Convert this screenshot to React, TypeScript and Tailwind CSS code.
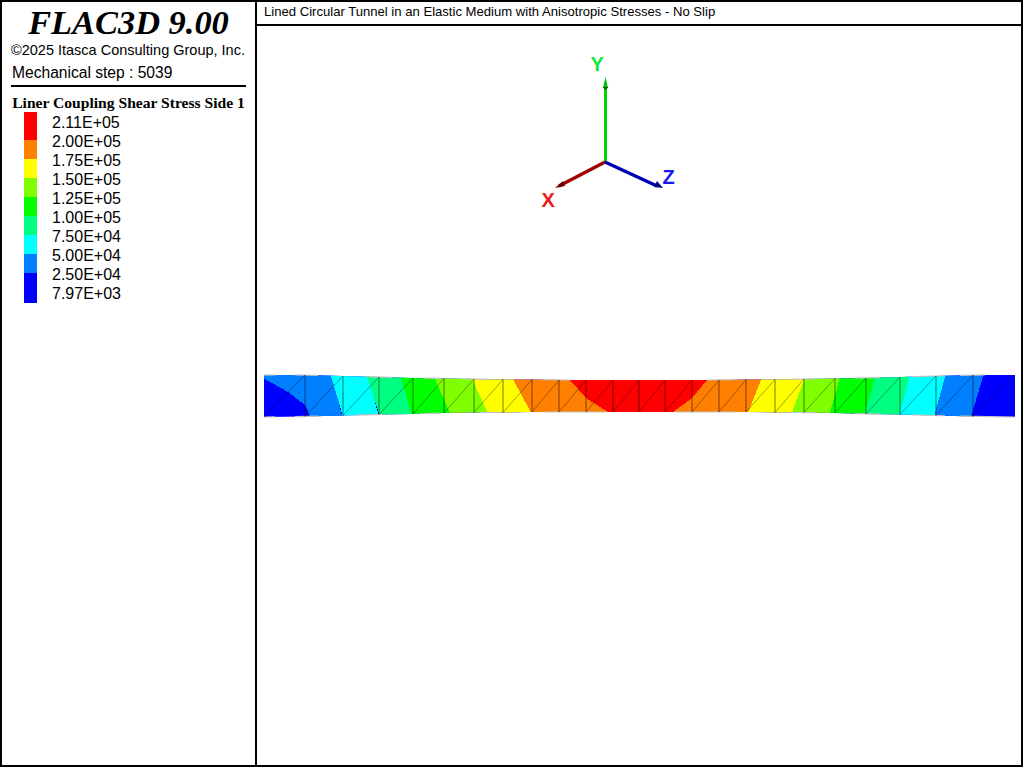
const legend = [
  { c: "bg-[#ff0000] h-[28px]", v: "2.11E+05" },
  { c: "bg-[#ff8000] h-[19px]", v: "2.00E+05" },
  { c: "bg-[#ffff00] h-[19px]", v: "1.75E+05" },
  { c: "bg-[#80ff00] h-[19px]", v: "1.50E+05" },
  { c: "bg-[#00ff00] h-[19px]", v: "1.25E+05" },
  { c: "bg-[#00ff80] h-[19px]", v: "1.00E+05" },
  { c: "bg-[#00ffff] h-[19px]", v: "7.50E+04" },
  { c: "bg-[#0080ff] h-[19px]", v: "5.00E+04" },
  { c: "bg-[#0000ff] h-[30px]", v: "2.50E+04" },
];

const tops: [number, number][] = [
  [264, 375], [305, 375], [343, 376], [379, 377], [413, 378], [444, 378.5], [474, 379], [503, 379.5],
  [532, 379.5], [559, 380], [586, 380], [613, 380], [639, 380], [665, 380], [692, 380], [719, 380],
  [746, 379.5], [775, 379.5], [804, 379], [835, 378.5], [866, 378], [900, 377], [936, 376], [973, 375], [1015, 375],
];
const bots: [number, number][] = [
  [264, 417], [305, 416.5], [343, 415.5], [379, 414.5], [413, 414], [444, 413], [474, 412.5], [503, 412.5],
  [532, 412], [559, 412], [586, 412], [613, 412], [639, 412], [665, 412], [692, 412], [719, 412],
  [746, 412], [775, 412.5], [804, 412.5], [835, 413], [866, 414], [900, 414.5], [936, 415.5], [973, 416.5], [1015, 417],
];
const outline = [...tops, ...[...bots].reverse()].map((p) => p.join(",")).join(" ");

const regions: { fill: string; pts: string }[] = [
  { fill: "#0000ff", pts: "260,370 1020,370 1020,420 260,420" },
  { fill: "#0080ff", pts: "260,370 331,370 343,420 312,420 305,405 288,392 263,378 260,376" },
  { fill: "#00ffff", pts: "330,370 366,370 380,420 344,420 331,376" },
  { fill: "#00ff80", pts: "365,370 400,370 414,420 381,420" },
  { fill: "#00ff00", pts: "399,370 432,370 454,420 413,420" },
  { fill: "#80ff00", pts: "431,370 469,370 492,420 453,420" },
  { fill: "#ffff00", pts: "468,370 509,370 536,420 491,420" },
  { fill: "#ff8000", pts: "508,370 766,370 745,420 535,420" },
  { fill: "#ff0000", pts: "562,370 570,380 586,398 608,412 612,420 668,420 673,412 692,398 707,380 715,370" },
  { fill: "#ffff00", pts: "765,370 809,370 790,420 745,420" },
  { fill: "#80ff00", pts: "808,370 843,370 829,420 789,420" },
  { fill: "#00ff00", pts: "842,370 878,370 864,420 828,420" },
  { fill: "#00ff80", pts: "877,370 912,370 899,420 863,420" },
  { fill: "#00ffff", pts: "911,370 948,370 934,420 898,420" },
  { fill: "#0080ff", pts: "947,370 985,370 970,420 933,420" },
];

const grayTop: [number, number][] = [[264, 275], [295, 318], [366, 392], [424, 440], [465, 490], [544, 570], [707, 735], [790, 815], [855, 880], [912, 945], [960, 985]];
const grayBot: [number, number][] = [[264, 275], [295, 318], [356, 382], [420, 440], [480, 500], [545, 605], [675, 735], [790, 815], [855, 880], [912, 945], [960, 1015]];

function yAt(line: [number, number][], x: number) {
  for (let i = 0; i < line.length - 1; i++) {
    const [a, b] = [line[i], line[i + 1]];
    if (x >= a[0] && x <= b[0]) return a[1] + ((b[1] - a[1]) * (x - a[0])) / (b[0] - a[0]);
  }
  return line[line.length - 1][1];
}

export default function App() {
  return (
    <div className="w-[1023px] h-[767px] bg-white border-2 border-black flex overflow-hidden font-['Liberation_Sans',Arial,sans-serif] text-black">
      <aside className="w-[253px] shrink-0 flex flex-col pl-[9px] pr-[9px]">
        <div className="h-[40px] text-center whitespace-nowrap font-['Liberation_Serif','Times_New_Roman',serif] italic font-bold text-[34.4px] leading-[40px]">
          FLAC3D 9.00
        </div>
        <div className="mt-[-1px] h-[18px] text-[14.5px] leading-[18px] whitespace-nowrap">©2025 Itasca Consulting Group, Inc.</div>
        <div className="mt-[5px] h-[18px] pl-[1px] text-[15.6px] leading-[18px] whitespace-nowrap">Mechanical step : 5039</div>
        <div className="mt-[3px] h-[2px] bg-black" />
        <div className="mt-[7px] h-[17px] flex justify-center whitespace-nowrap font-['Liberation_Serif','Times_New_Roman',serif] font-bold text-[15.6px] leading-[17px]">
          Liner Coupling Shear Stress Side 1
        </div>
        <div className="mt-[1px] ml-[13px] flex gap-[15px]">
          <div className="w-[13px] flex flex-col">
            {legend.map((l) => (
              <div key={l.v} className={l.c} />
            ))}
          </div>
          <div className="flex flex-col text-[16px] leading-[19px] mt-[1px]">
            {legend.map((l) => (
              <div key={l.v} className="h-[19px] whitespace-nowrap">{l.v}</div>
            ))}
            <div className="h-[19px] whitespace-nowrap">7.97E+03</div>
          </div>
        </div>
      </aside>
      <main className="flex-1 min-w-0 border-l-2 border-black flex flex-col">
        <div className="h-[24px] shrink-0 border-b-2 border-black pl-[7px] text-[13.1px] leading-[20px] whitespace-nowrap">
          Lined Circular Tunnel in an Elastic Medium with Anisotropic Stresses - No Slip
        </div>
        <svg className="block flex-1" viewBox="257 26 764 739" width="764" height="739">
          <defs>
            <clipPath id="band">
              <polygon points={outline} />
            </clipPath>
          </defs>
          <g clipPath="url(#band)" shapeRendering="crispEdges">
            {regions.map((r, i) => (
              <polygon key={i} points={r.pts} fill={r.fill} />
            ))}
          </g>
          {grayTop.map(([a, b], i) => (
            <line key={i} x1={a} x2={b} y1={yAt(tops, a)} y2={yAt(tops, b)} stroke="#c4c4c4" strokeWidth="1.2" />
          ))}
          {grayBot.map(([a, b], i) => (
            <line key={i} x1={a} x2={b} y1={yAt(bots, a)} y2={yAt(bots, b)} stroke="#c4c4c4" strokeWidth="1.2" />
          ))}
          {tops.map((t, i) => (
            <line key={i} x1={t[0]} y1={t[1]} x2={bots[i][0]} y2={bots[i][1]} stroke="#000" strokeOpacity={i === 0 || i === 24 ? 0 : 0.4} strokeWidth="1.3" />
          ))}
          {tops.slice(1).map((t, i) => (
            <line key={i} x1={bots[i][0]} y1={bots[i][1]} x2={t[0]} y2={t[1]} stroke="#000" strokeOpacity="0.45" strokeWidth="0.8" />
          ))}

          <line x1="605.5" y1="162" x2="605.5" y2="84" stroke="#00d800" strokeWidth="3" />
          <polygon points="605.5,77 608,88 603,88" fill="#00c000" />
          <polygon points="602.5,87 608.5,87 605.5,90" fill="#006000" />
          <line x1="605" y1="162" x2="559" y2="186" stroke="#a00000" strokeWidth="3.4" />
          <polygon points="555,188 563,181 565,186" fill="#700000" />
          <line x1="605" y1="162" x2="657" y2="186" stroke="#0000b0" strokeWidth="3.4" />
          <polygon points="663,188 654,187 657,181" fill="#000080" />

          <text x="590.5" y="71" fontFamily="'Liberation Sans',Arial,sans-serif" fontWeight="700" fontSize="20" fill="#10e840">Y</text>
          <text x="541.5" y="207" fontFamily="'Liberation Sans',Arial,sans-serif" fontWeight="700" fontSize="20" fill="#f01818">X</text>
          <text x="662.5" y="184" fontFamily="'Liberation Sans',Arial,sans-serif" fontWeight="700" fontSize="20" fill="#1818f0">Z</text>
        </svg>
      </main>
    </div>
  );
}
